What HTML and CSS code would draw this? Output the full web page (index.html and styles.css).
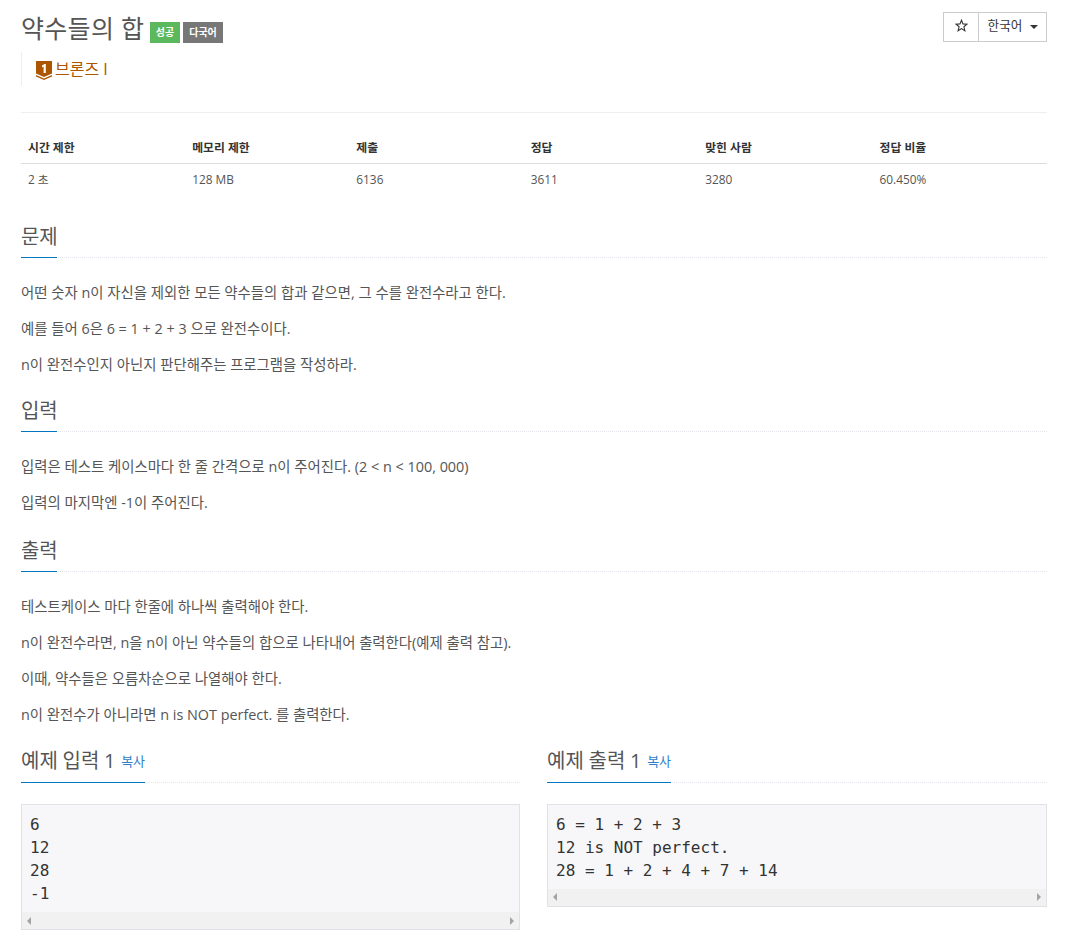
FILE: index.html
```html
<!DOCTYPE html>
<html lang="ko">
<head>
<meta charset="utf-8">
<title>약수들의 합</title>
<link rel="stylesheet" href="styles.css">
</head>
<body>
<div class="page">
  <header class="top">
    <div class="title-row">
      <h1 class="title">약수들의 합</h1>
      <span class="label label-green">성공</span>
      <span class="label label-gray">다국어</span>
    </div>
    <div class="btn-group">
      <span class="btn btn-star"><svg width="13" height="13" viewBox="0 0 13 13"><path d="M6.5 1.2 8 4.9l4 .3-3.1 2.6 1 3.9-3.4-2.1-3.4 2.1 1-3.9L1 5.2l4-.3z" fill="none" stroke="#333" stroke-width="1.1"/></svg></span>
      <span class="btn btn-lang">한국어<i class="caret"></i></span>
    </div>
  </header>
  <div class="tier">
    <svg class="medal" width="16" height="19" viewBox="0 0 16 19"><path d="M0 0h16v12.5l-8 3.5-8-3.5z" fill="#ad5600"/><path d="M0 14l8 3.5 8-3.5v1.5L8 19l-8-3.5z" fill="#ad5600"/><path d="M6 4.5 8.6 3h1.2v9H7.6V5.6L6 6.4z" fill="#fff"/></svg>
    <span class="tier-name">브론즈 I</span>
  </div>
  <hr class="rule">
  <table class="info">
    <thead>
      <tr><th>시간 제한</th><th>메모리 제한</th><th>제출</th><th>정답</th><th>맞힌 사람</th><th>정답 비율</th></tr>
    </thead>
    <tbody>
      <tr><td>2 초</td><td>128 MB</td><td>6136</td><td>3611</td><td>3280</td><td>60.450%</td></tr>
    </tbody>
  </table>
  <section class="sec">
    <div class="head"><h2>문제</h2></div>
    <p>어떤 숫자 n이 자신을 제외한 모든 약수들의 합과 같으면, 그 수를 완전수라고 한다.</p>
    <p>예를 들어 6은 6 = 1 + 2 + 3 으로 완전수이다.</p>
    <p>n이 완전수인지 아닌지 판단해주는 프로그램을 작성하라.</p>
  </section>
  <section class="sec">
    <div class="head"><h2>입력</h2></div>
    <p>입력은 테스트 케이스마다 한 줄 간격으로 n이 주어진다. (2 &lt; n &lt; 100, 000)</p>
    <p>입력의 마지막엔 -1이 주어진다.</p>
  </section>
  <section class="sec sec-output">
    <div class="head"><h2>출력</h2></div>
    <p>테스트케이스 마다 한줄에 하나씩 출력해야 한다.</p>
    <p>n이 완전수라면, n을 n이 아닌 약수들의 합으로 나타내어 출력한다(예제 출력 참고).</p>
    <p>이때, 약수들은 오름차순으로 나열해야 한다.</p>
    <p>n이 완전수가 아니라면 n is NOT perfect. 를 출력한다.</p>
  </section>
  <div class="samples">
    <section class="sample">
      <div class="head"><h2>예제 입력 1 <a class="copy">복사</a></h2></div>
      <div class="code">
        <pre>6
12
28
-1</pre>
        <div class="bar"><i class="arrow arrow-l"></i><i class="arrow arrow-r"></i></div>
      </div>
    </section>
    <section class="sample">
      <div class="head"><h2>예제 출력 1 <a class="copy">복사</a></h2></div>
      <div class="code">
        <pre>6 = 1 + 2 + 3
12 is NOT perfect.
28 = 1 + 2 + 4 + 7 + 14</pre>
        <div class="bar"><i class="arrow arrow-l"></i><i class="arrow arrow-r"></i></div>
      </div>
    </section>
  </div>
</div>
</body>
</html>
```
FILE: styles.css
```css
* { box-sizing: border-box; }
html, body { margin: 0; padding: 0; background: #fff; }
body {
  font-family: "Open Sans", "Noto Sans CJK KR", sans-serif;
  font-size: 13px;
  color: #555;
  line-height: 1.42857;
}
.page { width: 1068px; padding: 12px 21px 0; }
.top { display: flex; justify-content: space-between; align-items: flex-start; height: 40px; }
.title-row { display: flex; align-items: flex-start; }
.title { margin: 0 5.5px 0 0; font-size: 25px; font-weight: 400; line-height: 32px; color: #555; letter-spacing: .3px; }
.label {
  height: 21px; line-height: 21px; padding: 0 6px; margin: 10px 3px 0 0;
  font-size: 10px; font-weight: 700; color: #fff;
}
.label-green { background: #5cb85c; }
.label-gray { background: #777; }
.btn-group { display: flex; height: 30px; border: 1px solid #ccc; color: #333; background: #fff; }
.btn { display: flex; align-items: center; justify-content: center; padding-bottom: 2px; }
.btn-star { width: 35px; border-right: 1px solid #ccc; padding-bottom: 4px; }
.btn-lang { width: 67px; font-size: 12.6px; padding-left: 1px; }
.caret { display: block; margin: 2px 0 0 8px; border-top: 4px solid #333; border-left: 4px solid transparent; border-right: 4px solid transparent; }
.tier { display: flex; align-items: center; height: 34px; margin-bottom: 26px; border-left: 1px solid #eee; padding-left: 14px; font-size: 16px; color: #ad5600; }
.medal { margin: 2px 3px 0 0; display: block; }
.rule { margin: 0; border: 0; border-top: 1px solid #eee; }
.info { width: 100%; border-collapse: collapse; table-layout: fixed; margin-top: 18px; font-size: 11.85px; }
.info th:nth-child(-n+2) { width: 16%; }
.info th { width: 17%; padding: 0 7px 7px; height: 32px; vertical-align: bottom; text-align: left; color: #333; font-weight: 700; border-bottom: 1px solid #ddd; }
.info td { padding: 7px 7px; height: 32px; color: #555; }
.sec { margin-top: 24px; }
.sec + .sec { margin-top: 17px; }
.sec + .sec-output { margin-top: 19.5px; }
.head { border-bottom: 1px dotted #e5e5ee; margin-bottom: 25px; height: 39px; }
.head h2 {
  display: inline-block; height: 39px; margin: 0; font-size: 20px; font-weight: 400; line-height: 28px; color: #555;
  border-bottom: 1px solid #0076c0; padding-top: 4px;
}
.sec .head h2 { letter-spacing: -.2px; }
p { margin: 0 0 15.43px; font-size: 14.4px; line-height: 20.57px; color: #555; }
.samples { display: grid; grid-template-columns: 499px 500px; column-gap: 27px; margin-top: 17.5px; }
.sample .head { margin-bottom: 21px; height: 40px; }
.sample .head h2 { height: 40px; padding-top: 4.5px; word-spacing: -.5px; }
.copy { font-size: 13px; color: #2f80c8; margin-left: 1px; vertical-align: 2px; word-spacing: 0; }
.code { border: 1px solid #e1e1e8; background: #f7f7f9; }
pre { margin: 0; padding: 8px 8px 6.3px; font-family: "DejaVu Sans Mono", monospace; font-size: 16px; line-height: 23.3px; color: #333; }
.bar { height: 17px; background: #f1f1f1; display: flex; justify-content: space-between; align-items: center; padding: 0 5px; }
.arrow { display: block; border-top: 4px solid transparent; border-bottom: 4px solid transparent; }
.arrow-l { border-right: 4px solid #a3a3a3; }
.arrow-r { border-left: 4px solid #a3a3a3; }
```
